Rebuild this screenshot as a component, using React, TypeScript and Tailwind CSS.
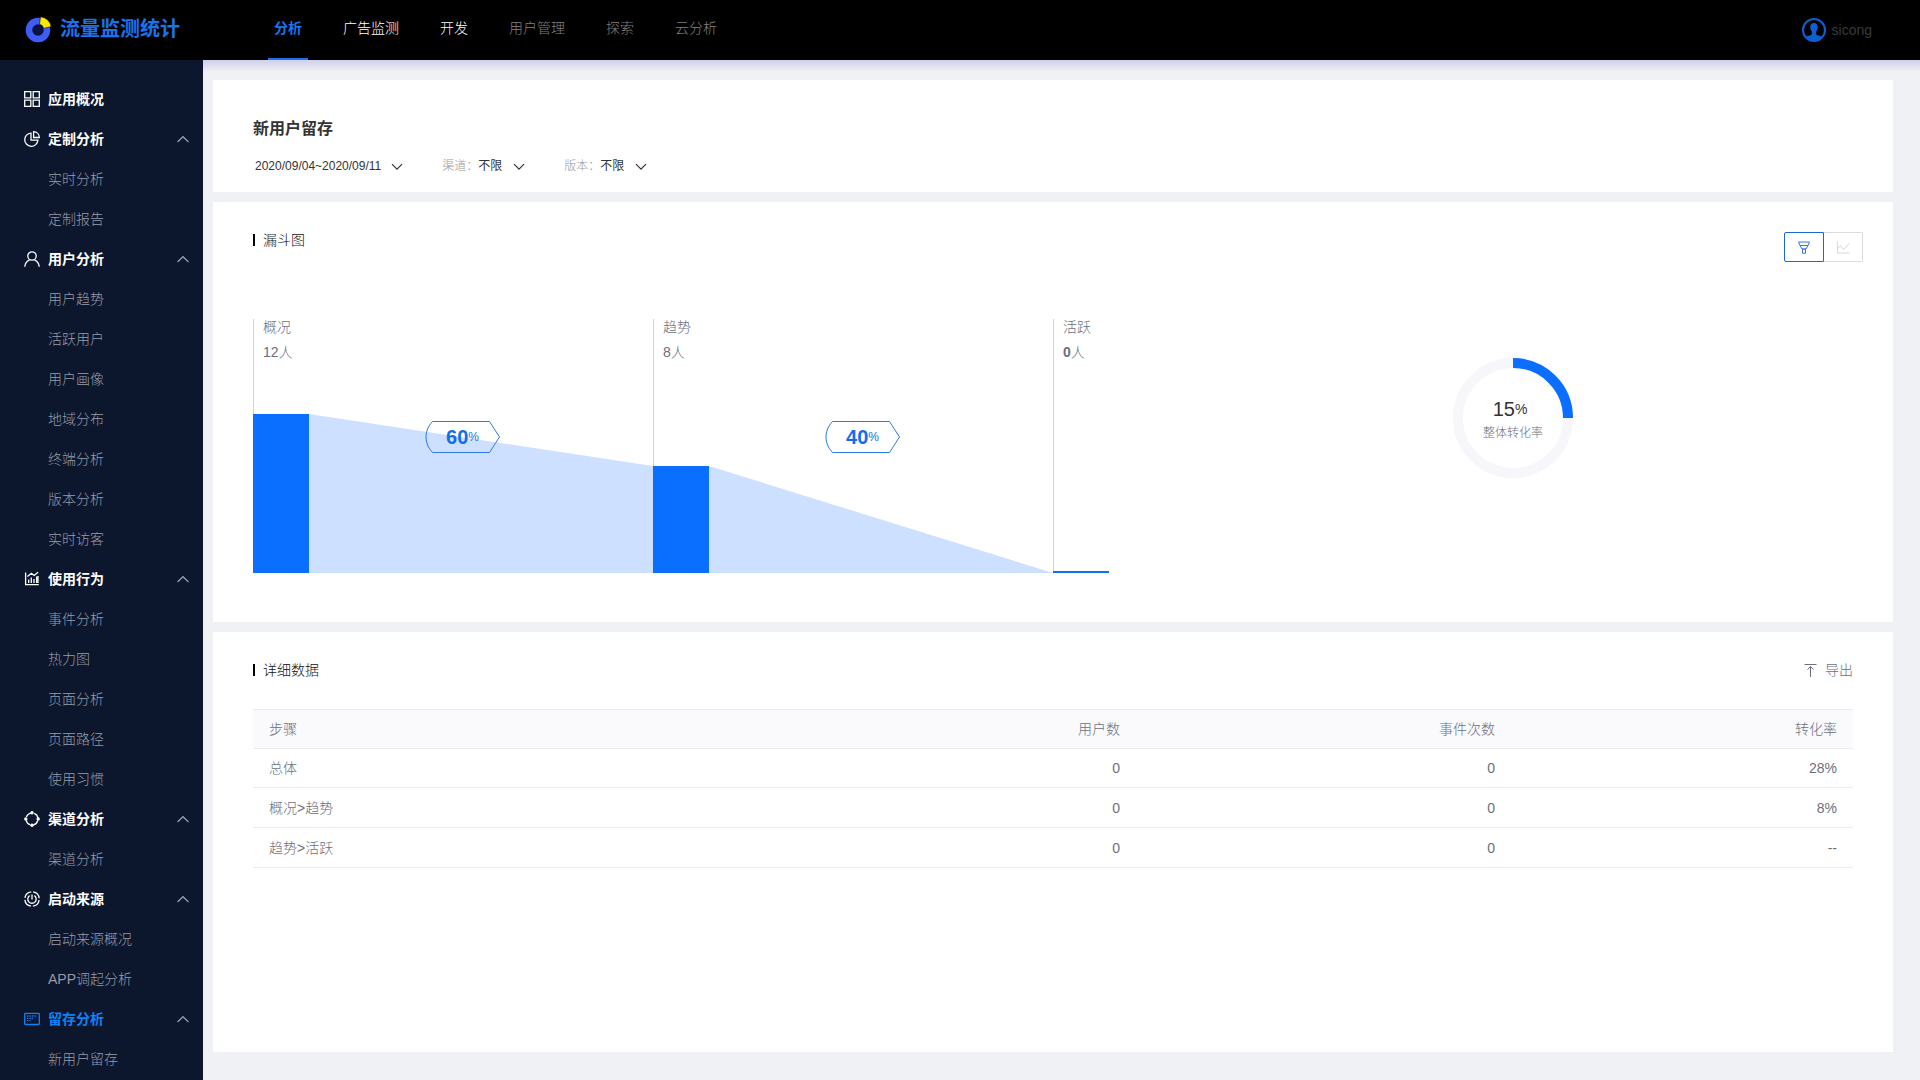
import { useState, type ReactNode } from "react";

type IconProps = { children: ReactNode };

function MenuIcon({ children }: IconProps) {
  return (
    <svg viewBox="0 0 16 16" className="h-4 w-4 shrink-0" fill="none" stroke="currentColor" strokeWidth="1.3" aria-hidden="true">
      {children}
    </svg>
  );
}

function Chevron({ up = false, className }: { up?: boolean; className: string }) {
  return (
    <svg viewBox="0 0 12 8" className={className} fill="none" stroke="currentColor" strokeWidth="1.2" aria-hidden="true">
      <path d={up ? "M0.5 7 6 1.7 11.5 7" : "M1 1.2 6 6.2 11 1.2"} />
    </svg>
  );
}

const menu = [
  {
    title: "应用概况",
    icon: <path d="M.7.7h6.1v6.1H.7zM9.2.7h6.1v6.1H9.2zM.7 9.2h6.1v6.1H.7zM9.2 9.2h6.1v6.1H9.2z" />,
    items: [],
  },
  {
    title: "定制分析",
    icon: <path d="M7 2.1A6.6 6.6 0 1 0 13.9 9.2H7zM9.6.7v5.800h5.700C15.300 3.200 12.800.9 9.600.7z" />,
    items: ["实时分析", "定制报告"],
  },
  {
    title: "用户分析",
    icon: (
      <>
        <circle cx="8" cy="5" r="4.2" />
        <path d="M.8 15.8c.2-3.4 2.4-6 4.8-7M15.2 15.8c-.2-3.4-2.4-6-4.8-7" />
      </>
    ),
    items: ["用户趋势", "活跃用户", "用户画像", "地域分布", "终端分析", "版本分析", "实时访客"],
  },
  {
    title: "使用行为",
    icon: <path d="M1.6 1.5v12.2h13.2M4.7 12V8.5M7.3 12V6.5M10 12V8M12.6 12V5.5M3.4 5.5l4-3.2 2.7 2.2 4-3.3M14 5v7" />,
    items: ["事件分析", "热力图", "页面分析", "页面路径", "使用习惯"],
  },
  {
    title: "渠道分析",
    icon: (
      <>
        <circle cx="8" cy="8" r="6" strokeDasharray="6.2 3.22" strokeDashoffset="-1.6" />
        <g fill="currentColor" stroke="none">
          <circle cx="8" cy="1.8" r="1.7" />
          <circle cx="14.2" cy="8" r="1.7" />
          <circle cx="8" cy="14.2" r="1.7" />
          <circle cx="1.8" cy="8" r="1.7" />
        </g>
      </>
    ),
    items: ["渠道分析"],
  },
  {
    title: "启动来源",
    icon: (
      <>
        <circle cx="8" cy="8" r="7.2" strokeDasharray="9.3 2" strokeDashoffset="-1" />
        <path d="M5.6 4.6a4.2 4.2 0 1 0 4.8 0M8 3.4v5" />
      </>
    ),
    items: ["启动来源概况", "APP调起分析"],
  },
  {
    title: "留存分析",
    icon: (
      <>
        <rect x=".7" y="2.3" width="14.6" height="11.2" rx=".8" />
        <path d="M3 5h10M3 7.3h6.5M3 9.6h3.5" strokeDasharray="1.4 1" />
      </>
    ),
    items: ["新用户留存"],
    active: true,
  },
];

const tabs = [
  { label: "分析", style: "font-bold text-[#1677ee]", active: true },
  { label: "广告监测", style: "text-white" },
  { label: "开发", style: "text-white" },
  { label: "用户管理", style: "text-[#808080]" },
  { label: "探索", style: "text-[#808080]" },
  { label: "云分析", style: "text-[#808080]" },
];

const stages = [
  { name: "概况", count: 12, height: 159, next: 107, rate: 60 },
  { name: "趋势", count: 8, height: 107, next: 0, rate: 40 },
  { name: "活跃", count: 0, height: 2, next: null, rate: null },
];

const rows = [
  ["总体", "0", "0", "28%"],
  ["概况>趋势", "0", "0", "8%"],
  ["趋势>活跃", "0", "0", "--"],
];

function Sidebar() {
  return (
    <aside className="w-[203px] shrink-0 bg-[#0c162d] pt-[19px]">
      <nav>
        {menu.map((group) => (
          <div key={group.title}>
            {group.items.length === 0 ? (
              <a href="#" className="flex h-10 items-center gap-2 pl-6 font-bold text-white">
                <MenuIcon>{group.icon}</MenuIcon>
                {group.title}
              </a>
            ) : (
              <button
                type="button"
                className={`flex h-10 w-full items-center gap-2 pr-3.5 pl-6 font-bold ${group.active ? "text-[#0c84f8]" : "text-white"}`}
              >
                <MenuIcon>{group.icon}</MenuIcon>
                {group.title}
                <Chevron up className="ml-auto h-2 w-3 text-[#9aa0b4]" />
              </button>
            )}
            {group.items.map((item) => (
              <a key={item} href="#" className="flex h-10 items-center pl-12 text-[#989ca8]">
                {item}
              </a>
            ))}
          </div>
        ))}
      </nav>
    </aside>
  );
}

function Header() {
  return (
    <header className="relative z-10 flex h-[60px] shrink-0 bg-black pr-12 pl-[25px]">
      <div className="flex w-[249px] items-center gap-2 pb-0.5">
        <svg viewBox="0 0 27 27" className="h-[27px] w-[27px]" fill="none" aria-hidden="true">
          <circle cx="13" cy="14" r="12.5" fill="#0a1440" />
          <circle cx="13" cy="14" r="9" stroke="#3f5cf5" strokeWidth="6.5" />
          <path d="M15.5.8A13 13 0 0 1 26.3 10.6L18.6 12.4A5 5 0 0 0 14.5 8.3z" fill="#ffe900" stroke="#000" strokeWidth=".6" />
        </svg>
        <span className="text-xl font-bold text-[#1a73e8]">流量监测统计</span>
      </div>
      <nav className="flex gap-[41px]">
        {tabs.map((tab) => (
          <a key={tab.label} href="#" className={`relative flex items-center pb-1 ${tab.style}`}>
            {tab.label}
            {tab.active && <span className="absolute -inset-x-1.5 bottom-0 h-0.5 bg-[#1a73e8]" />}
          </a>
        ))}
      </nav>
      <a href="#" className="ml-auto flex items-center gap-1.5 text-[#3a3a3a]">
        <svg viewBox="0 0 24 24" className="h-6 w-6" aria-hidden="true">
          <circle cx="12" cy="12" r="11" fill="none" stroke="#0f5fd2" strokeWidth="2" />
          <path
            d="M12 5c2.6 0 3.9 1.8 3.7 4.4-.1 1.9-.7 3.3-1.6 4.2v2.6c0 1 4.2 1.1 6.1 3A11 11 0 0 1 3.8 19.2c1.9-1.9 6.1-2 6.1-3v-2.6c-.9-.9-1.5-2.3-1.6-4.2C8.1 6.8 9.4 5 12 5z"
            fill="#0f5fd2"
          />
        </svg>
        sicong
      </a>
    </header>
  );
}

function Filter({ id, label }: { id: string; label: string }) {
  return (
    <div className="flex items-center">
      <label htmlFor={id} className="text-[#999]">
        {label}：
      </label>
      <span className="flex items-center gap-2.5">
        <select id={id} className="appearance-none bg-transparent font-normal text-[#333]">
          <option>不限</option>
        </select>
        <Chevron className="mt-0.5 h-2 w-3" />
      </span>
    </div>
  );
}

function SectionTitle({ children }: { children: ReactNode }) {
  return (
    <h2 className="flex items-center gap-2 leading-4 text-[#111]">
      <span className="h-3 w-0.5 bg-black" />
      {children}
    </h2>
  );
}

function Funnel() {
  return (
    <>
      {stages.map((stage) => (
        <div key={stage.name} className="relative flex h-[254px] flex-col justify-between">
          <span className="absolute inset-y-0 left-0 w-px bg-[#d4d4d4]" />
          <div className="pl-2.5 leading-4 text-[#6c6f7c]">
            <div>{stage.name}</div>
            <div className="mt-[9px]">
              <span className={stage.count === 0 ? "font-bold" : ""}>{stage.count}</span>人
            </div>
          </div>
          <div className="relative flex items-end">
            <div className="w-14 bg-[#0a6fff]" style={{ height: stage.height }} />
            {stage.next !== null && (
              <svg
                viewBox={`0 0 100 ${stage.height}`}
                preserveAspectRatio="none"
                className="min-w-0 flex-1"
                style={{ height: stage.height }}
                aria-hidden="true"
              >
                <path d={`M0 0L100 ${stage.height - stage.next}V${stage.height}H0z`} fill="#cee0ff" />
              </svg>
            )}
          </div>
          {stage.rate !== null && (
            <div className="absolute top-[102px] left-[43%] flex h-8 w-[75px] items-center justify-center text-[#146ee8]">
              <svg viewBox="0 0 75 32" className="absolute inset-0 h-full w-full" fill="none" stroke="#2f7ae5" aria-hidden="true">
                <path d="M7.5 .5H64.5L74.5 16 64.5 31.5H7.5C-1.2 22 -1.2 10 7.5 .5z" />
              </svg>
              <span className="text-xl font-bold">{stage.rate}</span>
              <span className="text-xs">%</span>
            </div>
          )}
        </div>
      ))}
    </>
  );
}

export default function App() {
  const [view, setView] = useState<"funnel" | "trend">("funnel");

  return (
    <div className="flex min-h-screen flex-col bg-[#f0f1f5] font-['Liberation_Sans','Noto_Sans_CJK_SC',sans-serif] text-sm font-light">
      <Header />
      <div className="flex flex-1">
        <Sidebar />
        <main className="flex min-w-0 flex-1 flex-col gap-2.5 bg-linear-to-b from-[#cfcfe8] to-[#f0f1f5] to-[12px] pt-5 pr-[27px] pb-7 pl-2.5">
          <section className="bg-white px-10 pt-[37px] pb-[18px]">
            <h1 className="text-base leading-6 font-bold text-[#333]">新用户留存</h1>
            <div className="mt-[17px] flex gap-[39px] pl-0.5 text-xs leading-4 text-[#333]">
              <button type="button" className="flex items-center gap-2.5">
                2020/09/04~2020/09/11
                <Chevron className="mt-0.5 h-2 w-3" />
              </button>
              <Filter id="channel" label="渠道" />
              <Filter id="version" label="版本" />
            </div>
          </section>

          <section className="bg-white pt-[30px] pb-[49px]">
            <div className="flex items-start justify-between pr-[30px] pl-10">
              <SectionTitle>漏斗图</SectionTitle>
              <div className="flex">
                <button
                  type="button"
                  aria-label="漏斗图"
                  onClick={() => setView("funnel")}
                  className={`flex h-[30px] w-10 items-center justify-center rounded-l-xs border ${view === "funnel" ? "border-[#1a68d0] text-[#2f7ae5]" : "border-[#dcdcdc] text-[#dcdcdc]"}`}
                >
                  <svg viewBox="0 0 12 13" className="h-[13px] w-3" fill="none" stroke="currentColor" aria-hidden="true">
                    <path d="M.5 1h11L10 4.5H2zM2 4.5 4 8h4l2-3.5M4.5 8h3v4.2h-3z" />
                  </svg>
                </button>
                <button
                  type="button"
                  aria-label="趋势图"
                  onClick={() => setView("trend")}
                  className={`flex h-[30px] w-[39px] items-center justify-center rounded-r-xs border border-l-0 ${view === "trend" ? "border-[#1a68d0] text-[#2f7ae5]" : "border-[#dcdcdc] text-[#d8d8d8]"}`}
                >
                  <svg viewBox="0 0 13 13" className="h-[13px] w-[13px]" fill="none" stroke="currentColor" aria-hidden="true">
                    <path d="M.5 .5v11.5h12M1 7.5l2.5-3 3 4L12.5 2" />
                  </svg>
                </button>
              </div>
            </div>
            <div className="mt-[57px] grid grid-cols-4 px-10">
              <Funnel />
              <div className="relative mt-[39px] flex h-[120px] w-[120px] flex-col items-center justify-center pt-0.5">
                <svg viewBox="0 0 120 120" className="absolute inset-0" fill="none" strokeWidth="10" aria-hidden="true">
                  <circle cx="60" cy="60" r="55" stroke="#f6f6fb" />
                  <path d="M60 5A55 55 0 0 1 115 60" stroke="#0a6fff" />
                </svg>
                <div className="flex items-center pr-1.5 leading-7 text-[#333]">
                  <span className="text-xl">15</span>
                  <span>%</span>
                </div>
                <div className="text-xs leading-5 text-[#6c6f7c]">整体转化率</div>
              </div>
            </div>
          </section>

          <section className="flex-1 bg-white px-10 pt-[30px]">
            <div className="flex items-center justify-between">
              <SectionTitle>详细数据</SectionTitle>
              <button type="button" className="flex items-center gap-2 leading-4 text-[#6c6f7c]">
                <svg viewBox="0 0 13 13" className="h-[13px] w-[13px]" fill="none" stroke="currentColor" aria-hidden="true">
                  <path d="M.5 .5h12M6.5 2.5V13M3.5 5.5l3-3 3 3" />
                </svg>
                导出
              </button>
            </div>
            <table className="mt-[31px] w-full border-collapse text-right text-[#6c6f7c]">
              <thead>
                <tr className="h-[39px] border-y border-[#ebebed] bg-[#fafafc]">
                  <th className="px-4 text-left font-light">步骤</th>
                  <th className="w-[23%] px-4 font-light">用户数</th>
                  <th className="w-[375px] px-4 font-light">事件次数</th>
                  <th className="w-[342px] px-4 font-light">转化率</th>
                </tr>
              </thead>
              <tbody>
                {rows.map(([step, users, events, rate]) => (
                  <tr key={step} className="h-10 border-b border-[#ebebed] first:h-[39px]">
                    <td className="px-4 text-left">{step}</td>
                    <td className="px-4">{users}</td>
                    <td className="px-4">{events}</td>
                    <td className="px-4">{rate}</td>
                  </tr>
                ))}
              </tbody>
            </table>
          </section>
        </main>
      </div>
    </div>
  );
}
